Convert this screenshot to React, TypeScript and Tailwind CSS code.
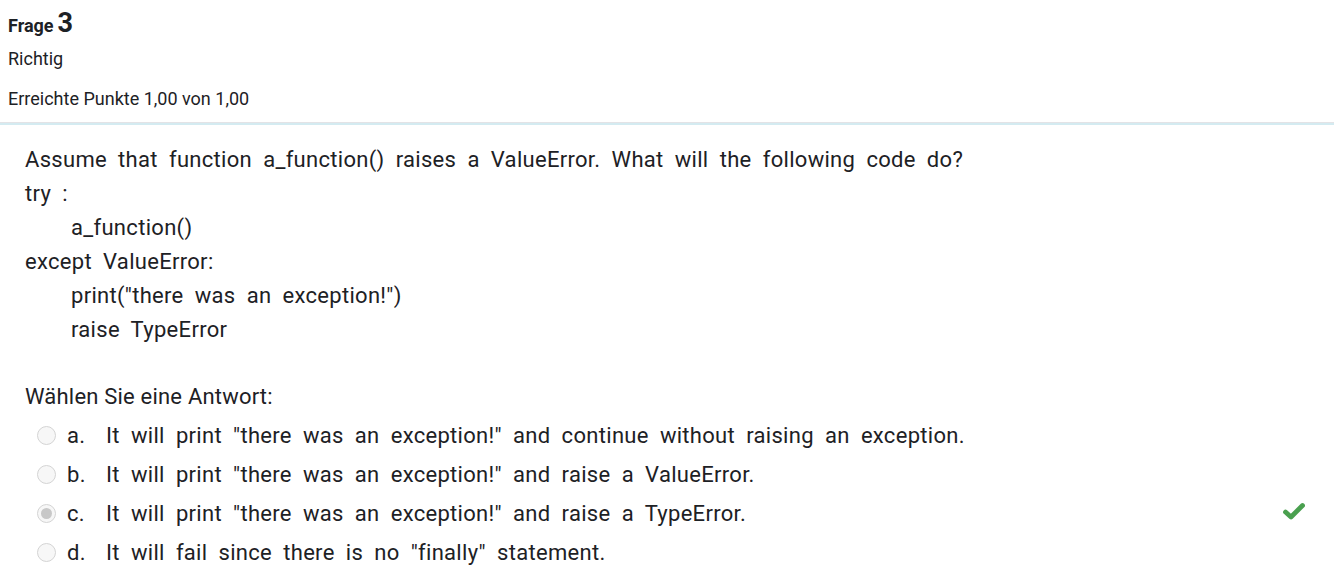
import React from "react";

const answers = [
  { l: "a.", t: 'It will print "there was an exception!" and continue without raising an exception.', sel: false },
  { l: "b.", t: 'It will print "there was an exception!" and raise a ValueError.', sel: false },
  { l: "c.", t: 'It will print "there was an exception!" and raise a TypeError.', sel: true },
  { l: "d.", t: 'It will fail since there is no "finally" statement.', sel: false },
];

function Radio({ sel }: { sel: boolean }) {
  return (
    <span className="w-[19px] h-[19px] rounded-full border border-[#d4d4d4] bg-[#f7f7f7] flex items-center justify-center">
      {sel && <span className="w-[11px] h-[11px] rounded-full bg-[#c8c8c8]" />}
    </span>
  );
}

export default function App() {
  return (
    <div className="w-[1334px] h-[586px] bg-white text-[#1d2125] overflow-hidden" style={{ fontFamily: "Roboto, 'Liberation Sans', sans-serif" }}>
      <div className="pl-[8px] pt-[3px] h-[122px]">
        <div className="flex items-baseline gap-[4px] h-[30px]">
          <span className="text-[18px] font-bold">Frage</span>
          <span className="text-[27px] font-bold">3</span>
        </div>
        <div className="text-[18px] mt-[12px]">Richtig</div>
        <div className="text-[18px] mt-[13px]">Erreichte Punkte 1,00 von 1,00</div>
      </div>
      <div className="h-[1px] bg-[#e3e3e6]" />
      <div className="h-[2px] bg-[#d4ebf1]" />
      <div className="pl-[25px] pt-[18px] text-[22px] leading-[34px]">
        <div className="tracking-[0.3px] [word-spacing:5.4px]">
          <div>Assume that function a_function() raises a ValueError. What will the following code do?</div>
          <div>try :</div>
          <div className="pl-[46px]">a_function()</div>
          <div>except ValueError:</div>
          <div className="pl-[46px]">print("there was an exception!")</div>
          <div className="pl-[46px]">raise TypeError</div>
        </div>
        <div className="mt-[33px] tracking-[0.2px]">Wählen Sie eine Antwort:</div>
        <div className="mt-[2px] relative">
          {answers.map((a) => (
            <div key={a.l} className="flex items-center h-[39px] pl-[12px] tracking-[0.3px] [word-spacing:5.4px]">
              <Radio sel={a.sel} />
              <span className="ml-[11px] w-[39px]">{a.l}</span>
              <span>{a.t}</span>
              {a.sel && (
                <svg className="absolute left-[1258px] -mt-[6px]" width="22" height="18" viewBox="0 0 22 18">
                  <path d="M2.5 10 L8 15 L19.5 3.5" fill="none" stroke="#4aa04f" strokeWidth="4.8" strokeLinejoin="round" strokeLinecap="round" />
                </svg>
              )}
            </div>
          ))}
        </div>
      </div>
    </div>
  );
}
